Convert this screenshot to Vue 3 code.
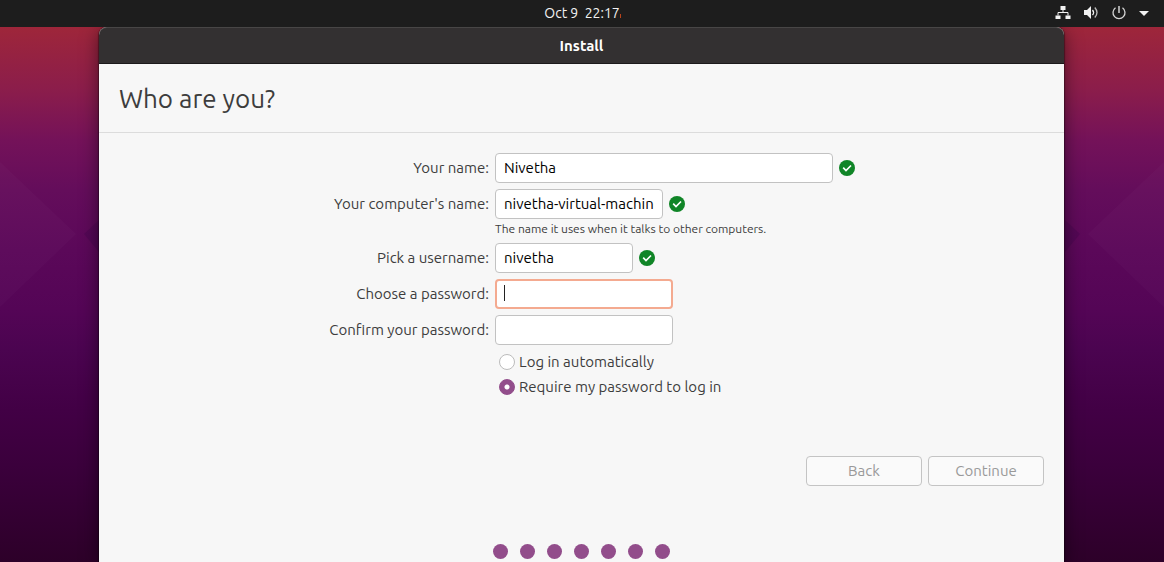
<script setup>
import { reactive } from 'vue'

const form = reactive({
  name: 'Nivetha',
  computer: 'nivetha-virtual-machine',
  username: 'nivetha',
  password: '',
  confirm: '',
  login: 'password',
})

const rows = [
  { key: 'name', label: 'Your name:', type: 'text', size: 'wide', valid: true },
  {
    key: 'computer',
    label: "Your computer's name:",
    type: 'text',
    size: 'medium',
    valid: true,
    hint: 'The name it uses when it talks to other computers.',
  },
  { key: 'username', label: 'Pick a username:', type: 'text', size: 'small', valid: true },
  { key: 'password', label: 'Choose a password:', type: 'password', size: 'secret', active: true },
  { key: 'confirm', label: 'Confirm your password:', type: 'password', size: 'secret' },
]

const logins = [
  { value: 'auto', label: 'Log in automatically' },
  { value: 'password', label: 'Require my password to log in' },
]
</script>

<template>
  <div class="desktop">
    <svg class="facets left" viewBox="0 0 99 160" aria-hidden="true">
      <path d="M0 0 L76 72 L0 145Z" fill="#fff" opacity=".018" />
      <path d="M99 58 L84 72 L99 90Z" fill="#100030" opacity=".12" />
    </svg>
    <svg class="facets right" viewBox="0 0 99 160" aria-hidden="true">
      <path d="M99 0 L23 72 L99 145Z" fill="#fff" opacity=".018" />
      <path d="M0 58 L15 72 L0 90Z" fill="#100030" opacity=".12" />
    </svg>

    <header class="topbar">
      <time class="clock">Oct 9&nbsp; 22:17<i class="notice"></i></time>
      <div class="status">
        <svg width="16" height="16" viewBox="0 0 16 16" aria-label="Network">
          <path d="M5.500 1h5v4h-5zM.5 10.500h5v3.500h-5zM10.500 10.500h5v3.500h-5z" fill="#f2f2f2" />
          <path d="M8 5v3M3 10.500V7.500h10v3" fill="none" stroke="#f2f2f2" />
        </svg>
        <svg width="16" height="16" viewBox="0 0 16 16" aria-label="Volume">
          <path d="M1 5h3l4-4v13l-4-4H1z" fill="#f2f2f2" />
          <path d="M9.500 5q2.200 2.500 0 5" fill="none" stroke="#f2f2f2" stroke-width="1.300" />
          <path d="M11.800 2.500q4.400 5 0 10" fill="none" stroke="#bbb" stroke-width="1.300" />
        </svg>
        <svg width="16" height="16" viewBox="0 0 16 16" aria-label="Power">
          <path d="M4.500 2.800A6 6 0 1 0 11.500 2.800" fill="none" stroke="#d5d5d5" stroke-width="1.300" />
          <path d="M8 1v7" fill="none" stroke="#f2f2f2" stroke-width="1.300" />
        </svg>
        <svg width="12" height="16" viewBox="0 0 12 16" aria-hidden="true">
          <path d="M0 6h10L5 11z" fill="#f2f2f2" />
        </svg>
      </div>
    </header>

    <main class="window">
      <div class="titlebar">Install</div>
      <h1>Who are you?</h1>

      <form @submit.prevent>
        <div class="fields">
          <div v-for="row in rows" :key="row.key" class="row">
            <label class="caption" :for="row.key">{{ row.label }}</label>
            <div class="entry">
              <span class="box" :class="row.size">
                <input
                  :id="row.key"
                  v-model="form[row.key]"
                  :type="row.type"
                  :class="{ active: row.active }"
                  spellcheck="false"
                  autocomplete="off"
                />
                <i v-if="row.active && !form.password" class="cursor"></i>
              </span>
              <svg v-if="row.valid" width="16" height="16" viewBox="0 0 16 16" aria-label="Valid">
                <circle cx="8" cy="8" r="8" fill="#108527" />
                <path d="M4.200 7.700L7 10.500l5-5" fill="none" stroke="#fff" stroke-width="1.700" />
              </svg>
            </div>
            <p v-if="row.hint" class="hint">{{ row.hint }}</p>
          </div>
        </div>
        <div class="row logins">
          <div class="choices">
            <label v-for="item in logins" :key="item.value" class="choice">
              <input v-model="form.login" type="radio" name="login" :value="item.value" />
              <span>{{ item.label }}</span>
            </label>
          </div>
        </div>

        <div class="actions">
          <button type="button" disabled>Back</button>
          <button type="submit" disabled>Continue</button>
        </div>
      </form>

      <div class="steps">
        <span v-for="n in 7" :key="n"></span>
      </div>
    </main>
  </div>
</template>

<style>
body {
  margin: 0;
  background: #2d0029;
}
</style>

<style scoped>
.desktop {
  position: relative;
  display: flex;
  flex-direction: column;
  min-height: 100vh;
  overflow: hidden;
  background: linear-gradient(#9e263a 27px, #8b1d4b 90px, #741259 140px, #640d5b 190px, #5b0859 250px, #540556 310px, #4b0450 350px, #420045 410px, #3b003c 465px, #2d0029 562px);
  color: #3d3d3d;
  font-family: Ubuntu, 'Noto Sans', sans-serif;
  font-size: 15px;
  line-height: 20px;
}
.facets {
  position: absolute;
  top: 162px;
  width: 99px;
  height: 160px;
}
.left {
  left: 0;
}
.right {
  right: 0;
}
.topbar {
  position: relative;
  z-index: 1;
  box-sizing: border-box;
  display: grid;
  grid-template-columns: 1fr auto 1fr;
  align-items: center;
  height: 27px;
  padding-bottom: 1px;
  background: #1d1d1d;
  color: #f2f2f2;
  font-size: 14px;
}
.clock {
  position: relative;
  grid-column: 2;
}
.notice {
  position: absolute;
  right: -1px;
  bottom: 5px;
  width: 1px;
  height: 4px;
  background: #b8431c;
}
.status {
  display: flex;
  align-items: center;
  justify-content: flex-end;
  gap: 12px;
  padding-right: 13px;
}
.status svg,
.entry svg {
  flex: none;
}
.window {
  position: relative;
  display: flex;
  flex: 1;
  flex-direction: column;
  margin: 0 100px 0 99px;
  border-radius: 8px 8px 0 0;
  background: #f7f7f7;
  box-shadow: 0 0 1px 1px rgba(0, 0, 0, 0.35), 0 3px 18px rgba(0, 0, 0, 0.5);
}
.titlebar {
  box-sizing: border-box;
  height: 37px;
  border-top: 1px solid #484646;
  border-bottom: 1px solid #1c1a1b;
  border-radius: 8px 8px 0 0;
  background: #333031;
  color: #fff;
  font-weight: 700;
  line-height: 36px;
  text-align: center;
}
h1 {
  margin: 0;
  padding: 19px 20px 17px;
  border-bottom: 1px solid #dcdcdc;
  font-size: 26px;
  font-weight: 400;
  line-height: 32px;
}
form {
  padding: 20px;
}
.fields {
  display: grid;
  gap: 6px;
}
.row {
  display: grid;
  grid-template-columns: 40% 1fr;
  column-gap: 6px;
}
.caption {
  line-height: 30px;
  text-align: right;
}
.entry {
  display: flex;
  align-items: center;
  gap: 6px;
}
.box {
  position: relative;
  display: flex;
}
.wide {
  width: 338px;
}
.medium {
  width: 168px;
}
.small {
  width: 138px;
}
.secret {
  width: 178px;
}
.box input {
  box-sizing: border-box;
  width: 100%;
  height: 30px;
  padding: 0 8px 2px;
  border: 1px solid #c2c2c2;
  border-radius: 4px;
  outline: none;
  background: #fff;
  color: #000;
  font: inherit;
}
.box input.active {
  border: 2px solid #f4aa90;
  caret-color: transparent;
}
.cursor {
  position: absolute;
  top: 6px;
  left: 9px;
  width: 1px;
  height: 16px;
  background: #222;
}
.hint {
  grid-column: 2;
  margin: 2px 0 0;
  font-size: 12px;
  line-height: 16px;
}
.logins {
  margin-top: 4px;
}
.choices {
  grid-column: 2;
  padding-left: 4px;
}
.choice {
  display: flex;
  align-items: center;
  gap: 4px;
  height: 25px;
}
.choice input {
  appearance: none;
  box-sizing: border-box;
  width: 16px;
  height: 16px;
  margin: 0;
  border: 1px solid #bcbcbc;
  border-radius: 50%;
  background: #fff;
}
.choice input:checked {
  border-color: #924d8b;
  background: radial-gradient(circle, #fff 2px, #924d8b 3px);
}
.actions {
  display: flex;
  justify-content: flex-end;
  gap: 6px;
  margin-top: 57px;
}
button {
  box-sizing: border-box;
  width: 116px;
  height: 30px;
  padding: 0;
  border: 1px solid #c4c4c4;
  border-radius: 4px;
  background: #fafafa;
  color: #999;
  font: inherit;
}
.steps {
  display: flex;
  justify-content: center;
  gap: 12px;
  margin-top: 38px;
}
.steps span {
  width: 15px;
  height: 15px;
  border-radius: 50%;
  background: #924d8b;
}
</style>
